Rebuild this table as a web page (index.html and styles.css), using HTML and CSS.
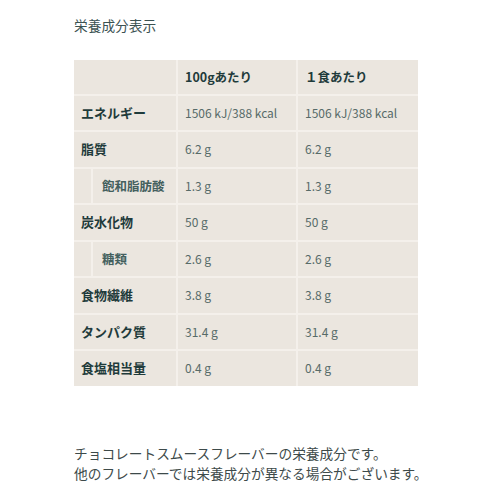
FILE: index.html
```
<!DOCTYPE html>
<html lang="ja">
<head>
<meta charset="utf-8">
<link rel="stylesheet" href="styles.css">
</head>
<body>
<div class="page">
  <h2 class="title">栄養成分表示</h2>
  <table class="nutri">
    <colgroup><col class="c1"><col class="c2"><col class="c3"></colgroup>
    <thead>
      <tr><th></th><th>100gあたり</th><th>１食あたり</th></tr>
    </thead>
    <tbody>
      <tr><th>エネルギー</th><td>1506 kJ/388 kcal</td><td>1506 kJ/388 kcal</td></tr>
      <tr><th>脂質</th><td>6.2 g</td><td>6.2 g</td></tr>
      <tr class="sub"><th><div class="subcell">飽和脂肪酸</div></th><td>1.3 g</td><td>1.3 g</td></tr>
      <tr><th>炭水化物</th><td>50 g</td><td>50 g</td></tr>
      <tr class="sub"><th><div class="subcell">糖類</div></th><td>2.6 g</td><td>2.6 g</td></tr>
      <tr><th>食物繊維</th><td>3.8 g</td><td>3.8 g</td></tr>
      <tr><th>タンパク質</th><td>31.4 g</td><td>31.4 g</td></tr>
      <tr><th>食塩相当量</th><td>0.4 g</td><td>0.4 g</td></tr>
    </tbody>
  </table>
  <p class="note">チョコレートスムースフレーバーの栄養成分です。<br>他のフレーバーでは栄養成分が異なる場合がございます。</p>
</div>
</body>
</html>
```

FILE: styles.css
```
html, body { margin: 0; padding: 0; background: #ffffff; }
body { font-family: "Noto Sans CJK JP", "Noto Sans", sans-serif; }
.page { padding: 14px 0 0 74px; }
.title { margin: 0; font-size: 13.7px; font-weight: 400; color: #3b5252; line-height: 22px; }
.nutri {
  margin-top: 24px;
  width: 344px;
  table-layout: fixed;
  border-collapse: collapse;
  background: #ebe6df;
}
.c1 { width: 103px; }
.c2 { width: 120px; }
.c3 { width: 121px; }
.nutri th, .nutri td {
  height: 33.5px;
  padding: 0 0 1px 7px;
  text-align: left;
  border: 2px solid #f4f0eb;
  font-size: 12px;
}
.nutri tr > :first-child { border-left: none; }
.nutri tr > :last-child { border-right: none; }
.nutri thead tr > * { border-top: none; }
.nutri tbody tr:last-child > * { border-bottom: none; }
.nutri th { font-weight: 700; color: #1f3b3b; font-size: 13px; }
.nutri thead th { height: 32.5px; font-size: 12.5px; }
.nutri td { color: #576b69; font-weight: 400; }
.nutri .sub th { padding: 0; height: 34.5px; }
.subcell {
  margin-left: 17px;
  border-left: 2px solid #f4f0eb;
  height: 34.5px;
  box-sizing: border-box;
  padding-bottom: 1px;
  display: flex;
  align-items: center;
  padding-left: 9px;
  color: #44605e;
  font-size: 12.5px;
}
.note { margin: 57px 0 0; font-size: 13.7px; color: #3d4a4a; line-height: 20px; }
```
